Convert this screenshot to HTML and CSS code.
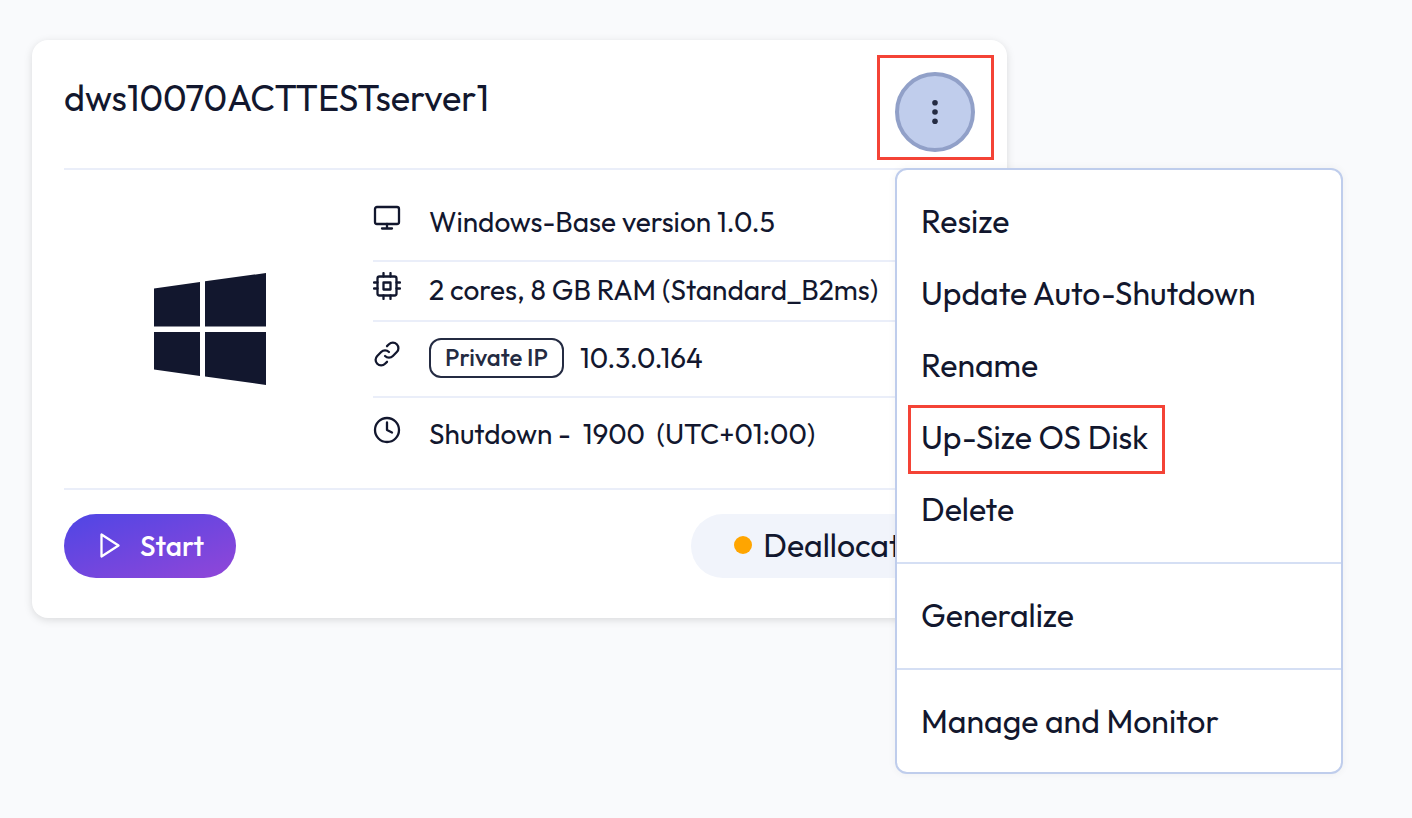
FILE: index.html
```
<!DOCTYPE html>
<html lang="en">
<head>
    <meta charset="UTF-8">
    <meta name="viewport" content="width=device-width, initial-scale=1.0">
    <title>dws10070ACTTESTserver1</title>
    <link rel="stylesheet" href="styles.css">
</head>
<body>

    <main class="server-card">
        <header class="card-header">
            <h1>dws10070ACTTESTserver1</h1>
            <div class="menu-wrapper">
                <button class="menu-toggle" type="button" aria-label="Server actions" aria-expanded="true">
                    <svg width="8" height="28" viewBox="0 0 8 28" fill="currentColor">
                        <circle cx="4" cy="4.7" r="2.8"/>
                        <circle cx="4" cy="14" r="2.8"/>
                        <circle cx="4" cy="23.3" r="2.8"/>
                    </svg>
                </button>
                <div class="menu">
                    <ul>
                        <li><button type="button">Resize</button></li>
                        <li><button type="button">Update Auto-Shutdown</button></li>
                        <li><button type="button">Rename</button></li>
                        <li class="highlighted"><button type="button">Up-Size OS Disk</button></li>
                        <li><button type="button">Delete</button></li>
                    </ul>
                    <ul>
                        <li><button type="button">Generalize</button></li>
                    </ul>
                    <ul>
                        <li><button type="button">Manage and Monitor</button></li>
                    </ul>
                </div>
            </div>
        </header>

        <section class="card-body">
            <div class="os-logo">
                <svg width="112" height="112" viewBox="0 0 112 112" fill="currentColor">
                    <path d="M0 15.5 46 9v44.500H0zM51 8.300 112 0v53.500H51zM0 59h46v44L0 96.500zM51 59h61v53l-61-8.500z"/>
                </svg>
            </div>
            <ul class="details">
                <li>
                    <svg class="icon" viewBox="0 0 28 28">
                        <rect x="2" y="3" width="24" height="17" rx="2"/>
                        <path d="M14 20v4.500M9 24.500h10"/>
                    </svg>
                    <span>Windows-Base version 1.0.5</span>
                </li>
                <li class="compact">
                    <svg class="icon" viewBox="0 0 28 28">
                        <rect x="4.500" y="4.500" width="19" height="19" rx="2"/>
                        <rect x="10.500" y="10.500" width="7" height="7"/>
                        <path d="M10.500 1v3.500M17.500 1v3.500M10.500 23.500V27M17.500 23.500V27M1 10.500h3.500M1 16.500h3.500M23.500 10.500H27M23.500 16.500H27"/>
                    </svg>
                    <span>2 cores, 8 GB RAM (Standard_B2ms)</span>
                </li>
                <li class="address">
                    <svg class="icon" viewBox="0 0 28 28">
                        <g transform="translate(-1.200 -1.200) scale(1.267)" stroke-width="1.800">
                            <path d="M13.544 10.456a4.368 4.368 0 0 0-6.176 0l-3.089 3.088a4.367 4.367 0 1 0 6.176 6.176L12 18.177"/>
                            <path d="M10.456 13.544a4.368 4.368 0 0 0 6.176 0l3.089-3.088a4.367 4.367 0 1 0-6.176-6.176L12 5.823"/>
                        </g>
                    </svg>
                    <span class="badge">Private IP</span>
                    <span>10.3.0.164</span>
                </li>
                <li>
                    <svg class="icon" viewBox="0 0 28 28">
                        <circle cx="14" cy="14" r="12"/>
                        <path d="M14 6.500V14l5 2.500"/>
                    </svg>
                    <span>Shutdown -&nbsp; 1900&nbsp; (UTC+01:00)</span>
                </li>
            </ul>
        </section>

        <footer class="card-footer">
            <button class="start-button" type="button">
                <svg width="20" height="26" viewBox="0 0 20 26" fill="none" stroke="currentColor" stroke-width="2.300" stroke-linejoin="round">
                    <path d="M1.500 2.500v22L18.500 13.500z"/>
                </svg>
                Start
            </button>
            <div class="status"><span class="status-dot"></span>Deallocated</div>
        </footer>
    </main>

</body>
</html>
```
FILE: styles.css
```
*,
*::before,
*::after {
    box-sizing: border-box;
}

body {
    min-height: 100vh;
    margin: 0;
    padding: 40px 32px;
    background: #f9fafc;
    color: #12172e;
    font-family: "Outfit", "Lato", sans-serif;
    font-size: 28px;
    line-height: 36px;
}

button {
    font-family: inherit;
    color: inherit;
    border: none;
    cursor: pointer;
}

ul {
    list-style: none;
    margin: 0;
    padding: 0;
}

.server-card {
    max-width: 975px;
    padding: 32px 32px 40px;
    background: white;
    border-radius: 16px;
    box-shadow: 0 2px 8px rgba(0, 0, 0, 0.13);
}

.card-header {
    display: flex;
    justify-content: space-between;
    align-items: flex-start;
    padding-bottom: 16px;
    border-bottom: 2px solid #eaeef9;
}

h1 {
    margin: 0;
    font-size: 36px;
    font-weight: 400;
    line-height: 52px;
}

/* Actions menu */
.menu-wrapper {
    position: relative;
}

.menu-wrapper::before {
    content: "";
    position: absolute;
    inset: -17px -19px -8px -18px;
    border: 3px solid #f44336;
    pointer-events: none;
}

.menu-toggle {
    display: flex;
    align-items: center;
    justify-content: center;
    width: 80px;
    height: 80px;
    padding: 0;
    border: 4px solid #91a0c8;
    border-radius: 50%;
    background: #c0cdec;
    color: #242b42;
}

.menu {
    position: absolute;
    top: 96px;
    left: 0;
    z-index: 1;
    width: 448px;
    background: white;
    border: 2px solid #bfcdec;
    border-radius: 12px;
    box-shadow: 0 0 8px rgba(0, 0, 0, 0.05);
}

.menu ul {
    padding: 16px 0;
}

.menu ul:last-child {
    padding-bottom: 14px;
}

.menu ul + ul {
    border-top: 2px solid #d5dff4;
}

.menu li {
    position: relative;
}

.menu button {
    display: block;
    width: 100%;
    padding: 16px 24px 18px;
    background: none;
    font-size: 32px;
    line-height: 38px;
    text-align: left;
}

.highlighted::after {
    content: "";
    position: absolute;
    top: 3px;
    left: 11px;
    width: 257px;
    height: 69px;
    border: 3px solid #f44336;
    pointer-events: none;
}

/* Server details */
.card-body {
    display: grid;
    grid-template-columns: 291px 1fr;
    gap: 18px;
    padding: 14px 0;
    border-bottom: 2px solid #eaeef9;
}

.os-logo {
    display: flex;
    align-items: center;
    justify-content: center;
}

.details li {
    display: flex;
    align-items: center;
    padding: 20px 0;
    border-bottom: 2px solid #eaeef9;
}

.details li.compact {
    padding: 10px 0 12px;
}

.details li.address {
    padding: 16px 0 18px;
}

.details li:last-child {
    padding: 18px 0 22px;
    border-bottom: none;
}

.icon {
    width: 28px;
    height: 28px;
    margin: 0 28px 8px 0;
    fill: none;
    stroke: currentColor;
    stroke-width: 2.3;
    stroke-linecap: round;
    stroke-linejoin: round;
}

.badge {
    height: 40px;
    margin-right: 16px;
    padding: 0 14px;
    border: 2px solid #242b42;
    border-radius: 12px;
    color: #242b42;
    font-size: 24px;
    font-weight: 500;
    line-height: 34px;
}

/* Footer */
.card-footer {
    display: flex;
    justify-content: space-between;
    padding-top: 24px;
}

.start-button {
    display: flex;
    align-items: center;
    gap: 20px;
    height: 64px;
    padding: 0 32px 2px 36px;
    border-radius: 32px;
    background: linear-gradient(160deg, #4f46e5, #9146d8);
    color: white;
    font-size: 28px;
    font-weight: 500;
}

.status {
    display: flex;
    align-items: center;
    gap: 11px;
    height: 64px;
    padding: 0 39px 2px 43px;
    border-radius: 32px;
    background: #f1f4fb;
    font-size: 32px;
}

.status-dot {
    width: 18px;
    height: 18px;
    border-radius: 50%;
    background: #ffa500;
}
```
